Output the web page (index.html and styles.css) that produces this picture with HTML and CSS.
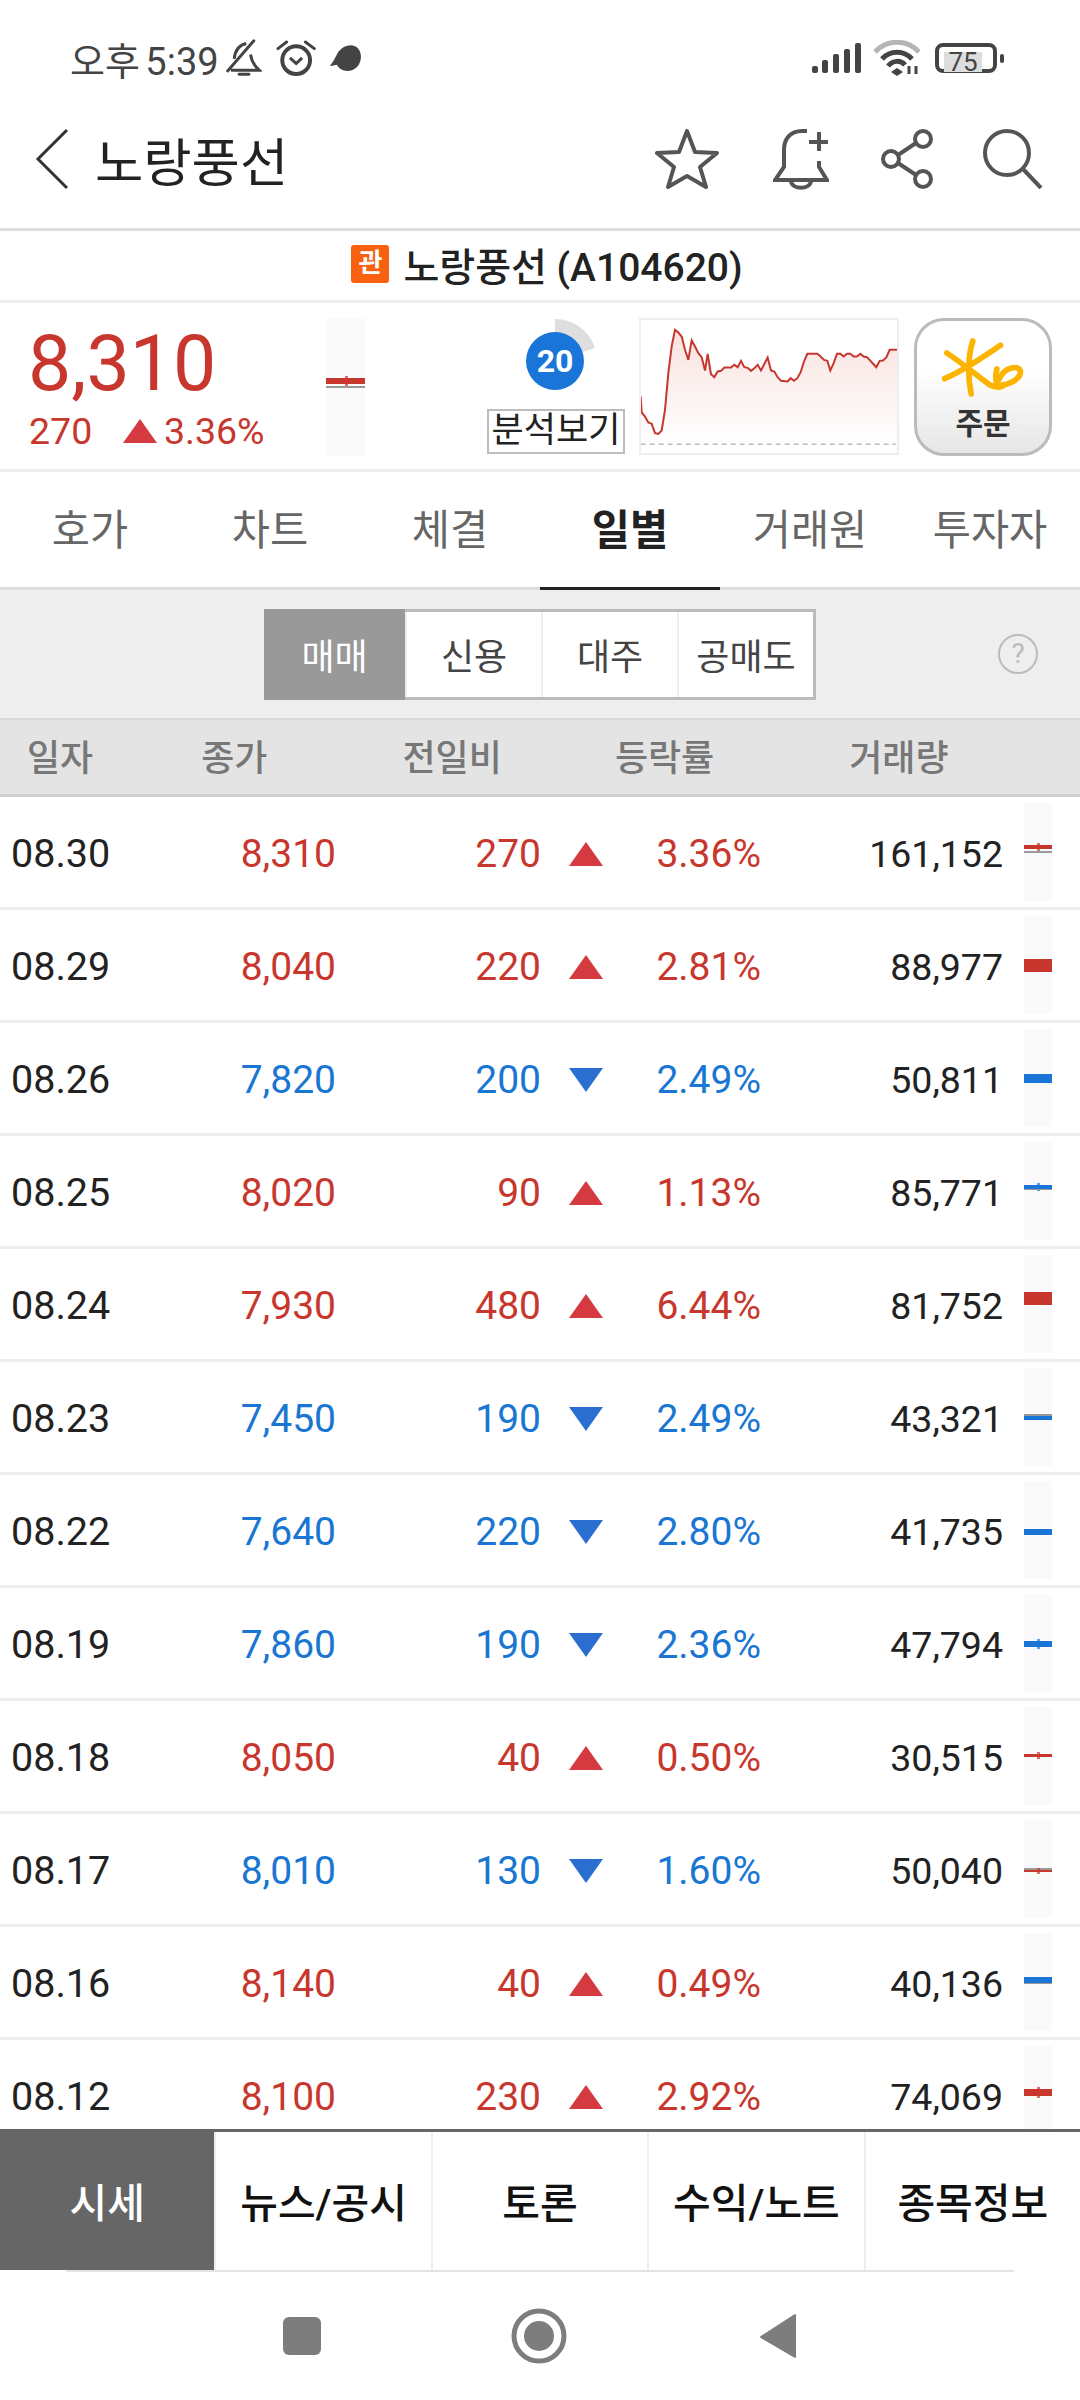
FILE: index.html
```html
<!DOCTYPE html>
<html lang="ko">

<head>
    <meta charset="UTF-8">
    <meta name="viewport" content="width=device-width, initial-scale=1.0">
    <title>노랑풍선</title>
    <link rel="stylesheet" href="styles.css">
</head>

<body>
    <div class="page">
        <!-- 상태바 -->
        <div class="status">
            <span class="clock">오후 5:39</span>
            <svg class="st-bell" width="36" height="38" viewBox="530 45 110 115" fill="none" stroke="#444" stroke-width="9">
                <path d="M555 105C558 78 572 62 592 58M605 92C608 112 618 128 632 140H545" />
                <path d="M570 152H600" stroke-linecap="round" />
                <path d="M535 142L615 50" stroke-linecap="round" />
            </svg>
            <svg class="st-alarm" width="41" height="39" viewBox="676 42 124 116" fill="none" stroke="#444">
                <circle cx="737" cy="105" r="42" stroke-width="12" />
                <path d="M718 98L737 115 755 98" stroke-width="9" />
                <path d="M682 70L708 50M792 70L765 50" stroke-width="9" stroke-linecap="round" />
            </svg>
            <svg class="st-chat" width="33" height="29" viewBox="836 55 100 88">
                <path d="M838 122C850 110 855 95 865 78 880 60 900 55 915 62 935 72 938 100 925 120 905 145 870 140 860 118 855 118 848 122 838 122z" fill="#444" />
            </svg>
            <span class="grow"></span>
            <svg class="st-signal" width="49" height="30" viewBox="0 0 49 30" fill="#444">
                <rect x="0" y="23" width="6" height="7" rx="2" />
                <rect x="10" y="17" width="6" height="13" rx="2" />
                <rect x="21" y="11" width="6" height="19" rx="2" />
                <rect x="32" y="6" width="6" height="24" rx="2" />
                <rect x="43" y="0" width="6" height="30" rx="2" />
            </svg>
            <svg class="st-wifi" width="46" height="36" viewBox="0 0 46 36" fill="none" stroke-width="5">
                <path d="M1 12C13 -1 33 -1 45 12" stroke="#b5b5b5" />
                <path d="M8 19C16 10 30 10 38 19" stroke="#444" />
                <path d="M14 26C19 20 27 20 31 25" stroke="#444" />
                <path d="M17 32l6-4 6 4-6 4z" fill="#444" stroke="none" />
                <path d="M35 34v-8M42 34v-8" stroke="#444" stroke-width="3" />
            </svg>
            <div class="battery"><span class="battery-fill">75</span></div>
            <span class="battery-nub"></span>
        </div>

        <!-- 상단 타이틀 -->
        <div class="appbar">
            <svg class="back" width="34" height="62" viewBox="0 0 34 62" fill="none" stroke="#333" stroke-width="3">
                <path d="M32 2L3 31l29 29" />
            </svg>
            <span class="title">노랑풍선</span>
            <span class="grow"></span>
            <svg class="ic-star" width="64" height="60" viewBox="0 0 64 60" fill="none" stroke="#555" stroke-width="4" stroke-linejoin="round">
                <path d="M32 2l8 21 22 1-17 14 6 20-19-11-19 11 6-20L2 24l22-1z" />
            </svg>
            <svg class="ic-bell" width="56" height="62" viewBox="0 0 56 62" fill="none" stroke="#555" stroke-width="4">
                <path d="M34 3h-5C17 3 11 11 11 22v17L2 52h52l-8-13v-6" />
                <path d="M18 53c1 9 19 9 20 0" />
                <path d="M36 14h19M46 4v19" />
            </svg>
            <svg class="ic-share" width="54" height="62" viewBox="0 0 54 62" fill="none" stroke="#555" stroke-width="4">
                <circle cx="43" cy="11" r="8" />
                <circle cx="11" cy="31" r="8" />
                <circle cx="43" cy="51" r="8" />
                <path d="M18 27l18-12M18 35l18 12" />
            </svg>
            <svg class="ic-search" width="60" height="60" viewBox="0 0 60 60" fill="none" stroke="#555" stroke-width="4">
                <circle cx="24" cy="24" r="22" />
                <path d="M40 40l18 19" />
            </svg>
        </div>

        <!-- 종목명 -->
        <div class="name-row">
            <span class="badge">관</span>
            <span class="name">노랑풍선 (A104620)</span>
        </div>

        <!-- 현재가 -->
        <div class="quote">
            <div class="price-box">
                <div class="price">8,310</div>
                <div class="change">
                    <span class="change-val">270</span>
                    <span class="tri up"></span>
                    <span>3.36%</span>
                </div>
            </div>
            <div class="mini mini-big">
                <div class="bar red wick" style="margin-top:60px;height:6px"></div>
                <div class="bar gray" style="margin-top:2px;height:2px"></div>
            </div>
            <div class="gauge-box">
                <div class="gauge">
                    <svg width="138" height="88" viewBox="0 0 138 88">
                        <path d="M68 1A42 42 0 0 1 108 30L68 43z" fill="#dedede" />
                        <circle cx="68" cy="43" r="29" fill="#1976d8" />
                    </svg>
                    <span class="gauge-num">20</span>
                </div>
                <div class="analysis">분석보기</div>
            </div>
            <div class="spark">
                <svg width="256" height="133" viewBox="16 16 768 398">
                    <defs>
                        <linearGradient id="fade" x1="0" y1="0" x2="0" y2="1">
                            <stop offset="0" stop-color="#f8e2df" />
                            <stop offset="1" stop-color="#ffffff" />
                        </linearGradient>
                    </defs>
                    <path id="area" fill="url(#fade)" d="M15 245L18 293 28 305 38 323 48 327 58 355 68 357 78 347 88 285 98 175 108 95 118 45 128 53 138 65 148 105 158 135 168 77 178 95 188 115 198 127 208 167 216 117 226 178 236 187 246 170 256 168 266 158 286 158 296 150 306 157 316 138 326 157 336 159 346 168 356 160 366 150 376 167 396 128 406 167 416 170 426 187 436 198 456 200 465 190 475 198 485 190 495 172 505 140 515 117 545 117 555 125 565 135 575 138 584 167 594 145 604 117 614 117 624 125 634 117 644 117 654 125 664 125 674 117 684 125 694 127 722 157 732 138 742 137 752 128 762 105 785 105V388H15z" />
                    <path fill="none" stroke="#c5372f" stroke-width="6" d="M15 245L18 293 28 305 38 323 48 327 58 355 68 357 78 347 88 285 98 175 108 95 118 45 128 53 138 65 148 105 158 135 168 77 178 95 188 115 198 127 208 167 216 117 226 178 236 187 246 170 256 168 266 158 286 158 296 150 306 157 316 138 326 157 336 159 346 168 356 160 366 150 376 167 396 128 406 167 416 170 426 187 436 198 456 200 465 190 475 198 485 190 495 172 505 140 515 117 545 117 555 125 565 135 575 138 584 167 594 145 604 117 614 117 624 125 634 117 644 117 654 125 664 125 674 117 684 125 694 127 722 157 732 138 742 137 752 128 762 105 785 105" />
                    <path d="M15 388H780" stroke="#999" stroke-width="3" stroke-dasharray="15 12" />
                </svg>
            </div>
            <div class="order">
                <svg width="82" height="59" viewBox="98 65 245 177" fill="none" stroke="#fbb400" stroke-width="17" stroke-linecap="round" stroke-linejoin="round">
                    <path d="M190 74C178 110 172 170 185 233" />
                    <path d="M112 110C150 135 200 175 240 205 255 213 270 213 278 210" />
                    <path d="M273 87C230 115 170 160 105 187" />
                    <path d="M262 158C258 175 258 195 264 208 300 205 333 190 333 165 328 145 285 150 268 190" />
                </svg>
                <span class="order-text">주문</span>
            </div>
        </div>

        <!-- 탭 -->
        <div class="tabs">
            <div class="tab">호가</div>
            <div class="tab">차트</div>
            <div class="tab">체결</div>
            <div class="tab active">일별</div>
            <div class="tab">거래원</div>
            <div class="tab">투자자</div>
        </div>

        <!-- 매매 구분 -->
        <div class="toolbar">
            <div class="seg">
                <div class="seg-item on">매매</div>
                <div class="seg-item">신용</div>
                <div class="seg-item">대주</div>
                <div class="seg-item">공매도</div>
            </div>
            <div class="help">?</div>
        </div>

        <div class="thead">
            <span class="th th-date">일자</span>
            <span class="th th-close">종가</span>
            <span class="th th-diff">전일비</span>
            <span class="th th-rate">등락률</span>
            <span class="th th-vol">거래량</span>
        </div>

        <div class="list">
            <div class="row">
                <span class="date">08.30</span><span class="num red-t">8,310</span><span class="num red-t">270</span>
                <span class="mark"><i class="tri up"></i></span><span class="num red-t">3.36%</span><span class="num vol">161,152</span>
                <div class="mini"><div class="bar red wick" style="margin-top:42px;height:4px"></div><div class="bar gray" style="margin-top:2px;height:2px"></div></div>
            </div>
            <div class="row">
                <span class="date">08.29</span><span class="num red-t">8,040</span><span class="num red-t">220</span>
                <span class="mark"><i class="tri up"></i></span><span class="num red-t">2.81%</span><span class="num vol">88,977</span>
                <div class="mini"><div class="bar red" style="margin-top:43px;height:13px"></div></div>
            </div>
            <div class="row">
                <span class="date">08.26</span><span class="num blue-t">7,820</span><span class="num blue-t">200</span>
                <span class="mark"><i class="tri down"></i></span><span class="num blue-t">2.49%</span><span class="num vol">50,811</span>
                <div class="mini"><div class="bar blue" style="margin-top:45px;height:9px"></div></div>
            </div>
            <div class="row">
                <span class="date">08.25</span><span class="num red-t">8,020</span><span class="num red-t">90</span>
                <span class="mark"><i class="tri up"></i></span><span class="num red-t">1.13%</span><span class="num vol">85,771</span>
                <div class="mini"><div class="bar blue wick" style="margin-top:43px;height:4px"></div><div class="bar gray" style="height:1px"></div></div>
            </div>
            <div class="row">
                <span class="date">08.24</span><span class="num red-t">7,930</span><span class="num red-t">480</span>
                <span class="mark"><i class="tri up"></i></span><span class="num red-t">6.44%</span><span class="num vol">81,752</span>
                <div class="mini"><div class="bar red" style="margin-top:37px;height:13px"></div></div>
            </div>
            <div class="row">
                <span class="date">08.23</span><span class="num blue-t">7,450</span><span class="num blue-t">190</span>
                <span class="mark"><i class="tri down"></i></span><span class="num blue-t">2.49%</span><span class="num vol">43,321</span>
                <div class="mini"><div class="bar gray" style="margin-top:46px;height:2px"></div><div class="bar blue" style="height:4px"></div></div>
            </div>
            <div class="row">
                <span class="date">08.22</span><span class="num blue-t">7,640</span><span class="num blue-t">220</span>
                <span class="mark"><i class="tri down"></i></span><span class="num blue-t">2.80%</span><span class="num vol">41,735</span>
                <div class="mini"><div class="bar blue" style="margin-top:48px;height:6px"></div></div>
            </div>
            <div class="row">
                <span class="date">08.19</span><span class="num blue-t">7,860</span><span class="num blue-t">190</span>
                <span class="mark"><i class="tri down"></i></span><span class="num blue-t">2.36%</span><span class="num vol">47,794</span>
                <div class="mini"><div class="bar blue wick" style="margin-top:47px;height:6px"></div></div>
            </div>
            <div class="row">
                <span class="date">08.18</span><span class="num red-t">8,050</span><span class="num red-t">40</span>
                <span class="mark"><i class="tri up"></i></span><span class="num red-t">0.50%</span><span class="num vol">30,515</span>
                <div class="mini"><div class="bar red wick" style="margin-top:47px;height:3px"></div></div>
            </div>
            <div class="row">
                <span class="date">08.17</span><span class="num blue-t">8,010</span><span class="num blue-t">130</span>
                <span class="mark"><i class="tri down"></i></span><span class="num blue-t">1.60%</span><span class="num vol">50,040</span>
                <div class="mini"><div class="bar gray" style="margin-top:48px;height:2px"></div><div class="bar red wick" style="height:2px"></div></div>
            </div>
            <div class="row">
                <span class="date">08.16</span><span class="num red-t">8,140</span><span class="num red-t">40</span>
                <span class="mark"><i class="tri up"></i></span><span class="num red-t">0.49%</span><span class="num vol">40,136</span>
                <div class="mini"><div class="bar blue" style="margin-top:44px;height:6px"></div><div class="bar gray" style="height:1px"></div></div>
            </div>
            <div class="row">
                <span class="date">08.12</span><span class="num red-t">8,100</span><span class="num red-t">230</span>
                <span class="mark"><i class="tri up"></i></span><span class="num red-t">2.92%</span><span class="num vol">74,069</span>
                <div class="mini"><div class="bar red wick" style="margin-top:43px;height:7px"></div></div>
            </div>
        </div>

        <!-- 하단 메뉴 -->
        <div class="menu">
            <div class="menu-item on">시세</div>
            <div class="menu-item">뉴스/공시</div>
            <div class="menu-item">토론</div>
            <div class="menu-item">수익/노트</div>
            <div class="menu-item">종목정보</div>
        </div>
        <div class="menu-line"></div>

        <!-- 내비게이션 바 -->
        <div class="navbar">
            <svg width="40" height="40" viewBox="0 0 40 40">
                <rect x="1" y="1" width="38" height="38" rx="6" fill="#7d7d7d" />
            </svg>
            <svg width="56" height="56" viewBox="0 0 56 56" fill="none">
                <circle cx="28" cy="28" r="25" stroke="#7d7d7d" stroke-width="5" />
                <circle cx="28" cy="28" r="15" fill="#7d7d7d" />
            </svg>
            <svg width="38" height="46" viewBox="0 0 38 46">
                <path d="M36 2v42L2 24z" fill="#7d7d7d" stroke="#7d7d7d" stroke-width="2" stroke-linejoin="round" />
            </svg>
        </div>
    </div>
</body>

</html>
```
FILE: styles.css
```css
* {
    margin: 0;
    padding: 0;
    box-sizing: border-box;
}

body {
    background-color: #fff;
    font-family: Roboto, "Noto Sans CJK KR", sans-serif;
    color: #222;
}

.page {
    width: 1080px;
    height: 2400px;
    display: flex;
    flex-direction: column;
    overflow: hidden;
}

.grow {
    flex: 1;
}

/* 상태바 */
.status {
    height: 100px;
    padding: 16px 76px 0 70px;
    display: flex;
    align-items: center;
    flex-shrink: 0;
}

.clock {
    font-size: 38px;
    color: #444;
    word-spacing: -4px;
}

.st-bell {
    margin-left: 7px;
}

.st-alarm {
    margin-left: 14px;
}

.st-chat {
    margin-left: 12px;
}

.st-wifi {
    margin-left: 13px;
}

.battery {
    width: 62px;
    height: 30px;
    margin-left: 15px;
    padding: 5px;
    border: 4px solid #444;
    border-radius: 8px;
    display: flex;
}

.battery-fill {
    width: 38px;
    height: 20px;
    background-color: #ddd;
    font-size: 26px;
    line-height: 20px;
    color: #444;
    text-align: center;
    white-space: nowrap;
}

.battery-nub {
    width: 4px;
    height: 9px;
    margin-left: 3px;
    background-color: #444;
    border-radius: 2px;
}

/* 타이틀 */
.appbar {
    height: 131px;
    padding: 0 37px 10px 35px;
    border-bottom: 3px solid #ddd;
    display: flex;
    align-items: center;
    flex-shrink: 0;
}

.title {
    margin-left: 26px;
    font-size: 52.5px;
    color: #222;
}

.ic-bell {
    margin-left: 54px;
}

.ic-share {
    margin-left: 51px;
}

.ic-search {
    margin-left: 49px;
}

.name-row {
    height: 72px;
    padding: 0 0 3px 14px;
    border-bottom: 3px solid #eee;
    display: flex;
    align-items: center;
    justify-content: center;
    flex-shrink: 0;
}

.badge {
    width: 38px;
    height: 38px;
    margin-right: 14px;
    background-color: #f8610f;
    border-radius: 3px;
    color: #fff;
    font-size: 26px;
    font-weight: 700;
    line-height: 36px;
    text-align: center;
}

.name {
    font-size: 39px;
    font-weight: 500;
    color: #222;
}

/* 현재가 */
.quote {
    height: 169px;
    padding: 15px 0 0 30px;
    border-bottom: 3px solid #eee;
    display: flex;
    align-items: flex-start;
    flex-shrink: 0;
}

.price-box {
    width: 296px;
    color: #c8372d;
}

.price {
    font-size: 77px;
    line-height: 88px;
    margin: 2px 0 0 -2px;
}

.change {
    display: flex;
    align-items: center;
    font-size: 37.5px;
    line-height: 44px;
    margin: 1px 0 0 -1px;
}

.change-val {
    width: 94px;
}

.change .tri {
    margin-right: 7px;
}

.tri {
    display: block;
    width: 0;
    height: 0;
    border-left: 17px solid transparent;
    border-right: 17px solid transparent;
}

.tri.up {
    border-bottom: 24px solid #d43a40;
}

.tri.down {
    border-top: 24px solid #2a6fd0;
}

.mini {
    width: 28px;
    height: 98px;
    background-color: #fafafa;
    flex-shrink: 0;
    overflow: hidden;
}

.mini-big {
    width: 39px;
    height: 138px;
}

.bar {
    position: relative;
}

.bar.red {
    background-color: #c8372d;
}

.bar.blue {
    background-color: #1976d8;
}

.bar.gray {
    background-color: #999;
}

/* 시가-종가 꼬리 */
.bar.wick::after {
    content: "";
    position: absolute;
    left: 50%;
    top: -2px;
    bottom: -2px;
    width: 3px;
    margin-left: -1px;
    background-color: inherit;
    opacity: 0.7;
}

.gauge-box {
    width: 138px;
    margin-left: 122px;
}

.gauge {
    height: 88px;
    position: relative;
}

.gauge-num {
    position: absolute;
    left: 39px;
    top: 26px;
    width: 58px;
    text-align: center;
    color: #fff;
    font-size: 32px;
    line-height: 34px;
    font-weight: 700;
}

.analysis {
    height: 45px;
    margin-top: 3px;
    border: 2px solid #bdbdbd;
    font-size: 35px;
    line-height: 39px;
    text-align: center;
    color: #222;
    white-space: nowrap;
}

.spark {
    width: 260px;
    height: 137px;
    margin-left: 14px;
    border: 2px solid #eee;
    overflow: hidden;
}

.order {
    width: 138px;
    height: 138px;
    margin-left: 15px;
    padding-top: 17px;
    border: 3px solid #bbb;
    border-radius: 30px;
    background: linear-gradient(#fff 35%, #e6e6e6);
    display: flex;
    flex-direction: column;
    align-items: center;
}

.order-text {
    margin-top: 9px;
    font-size: 30px;
    line-height: 36px;
    font-weight: 700;
    color: #333;
}

/* 탭 */
.tabs {
    height: 118px;
    border-bottom: 3px solid #ddd;
    display: flex;
    flex-shrink: 0;
}

.tab {
    flex: 1;
    display: flex;
    align-items: center;
    justify-content: center;
    padding-bottom: 6px;
    font-size: 41.5px;
    color: #666;
    margin-bottom: -3px;
    border-bottom: 3px solid transparent;
}

.tab.active {
    font-weight: 700;
    color: #222;
    border-bottom-color: #222;
}

.toolbar {
    height: 128px;
    background-color: #eee;
    display: flex;
    align-items: center;
    flex-shrink: 0;
    padding-left: 264px;
}

.seg {
    width: 552px;
    height: 91px;
    border: 3px solid #bbb;
    background-color: #fff;
    display: flex;
}

.seg-item {
    flex: 1;
    display: flex;
    align-items: center;
    justify-content: center;
    font-size: 36px;
    color: #444;
    border-left: 2px solid #eee;
}

.seg-item.on {
    flex: 0 0 141px;
    background-color: #999;
    color: #fff;
    border-left: 0;
    margin: -3px 0 -3px -3px;
}

.help {
    width: 40px;
    height: 40px;
    margin-left: 182px;
    border: 2px solid #bbb;
    border-radius: 50%;
    font-size: 28px;
    line-height: 36px;
    text-align: center;
    color: #bbb;
}

/* 표 머리글 */
.thead {
    height: 79px;
    padding-bottom: 4px;
    background-color: #e4e4e4;
    border-top: 2px solid #d8d8d8;
    border-bottom: 3px solid #d0d0d0;
    display: flex;
    align-items: center;
    flex-shrink: 0;
}

.th {
    font-size: 36px;
    font-weight: 500;
    color: #777;
}

.th-date {
    margin-left: 27px;
}

.th-close {
    margin-left: 108px;
}

.th-diff {
    margin-left: 135px;
}

.th-rate {
    margin-left: 113px;
}

.th-vol {
    margin-left: 135px;
}

.list {
    flex: 1;
    overflow: hidden;
    min-height: 0;
}

.row {
    height: 113px;
    padding: 3px 28px 0 11px;
    border-bottom: 3px solid #eee;
    display: grid;
    grid-template-columns: 111px 214px 205px 90px 130px 242px 49px;
    align-items: center;
}

.row .mini {
    justify-self: end;
    align-self: start;
    margin-top: 3px;
}

.date {
    font-size: 39.5px;
    color: #222;
}

.num {
    font-size: 39px;
    text-align: right;
    color: #222;
}

.num.vol {
    font-size: 37.5px;
}

.num.red-t {
    color: #c8372d;
}

.num.blue-t {
    color: #1976d2;
}

.mark .tri {
    margin: 0 auto;
}

/* 하단 메뉴 */
.menu {
    height: 141px;
    border-top: 3px solid #666;
    display: flex;
    flex-shrink: 0;
}

.menu-item {
    flex: 1;
    display: flex;
    align-items: center;
    justify-content: center;
    padding-bottom: 3px;
    font-size: 41px;
    font-weight: 500;
    color: #111;
    border-left: 2px solid #eee;
}

.menu-item.on {
    background-color: #666;
    color: #fff;
    border-left: 0;
}

.menu-line {
    height: 2px;
    margin: 0 66px;
    background-color: #e4e4e4;
    flex-shrink: 0;
}

.navbar {
    height: 128px;
    padding-left: 282px;
    display: flex;
    align-items: center;
    flex-shrink: 0;
}

.navbar svg:nth-child(2) {
    margin-left: 189px;
}

.navbar svg:nth-child(3) {
    margin-left: 192px;
}
```
